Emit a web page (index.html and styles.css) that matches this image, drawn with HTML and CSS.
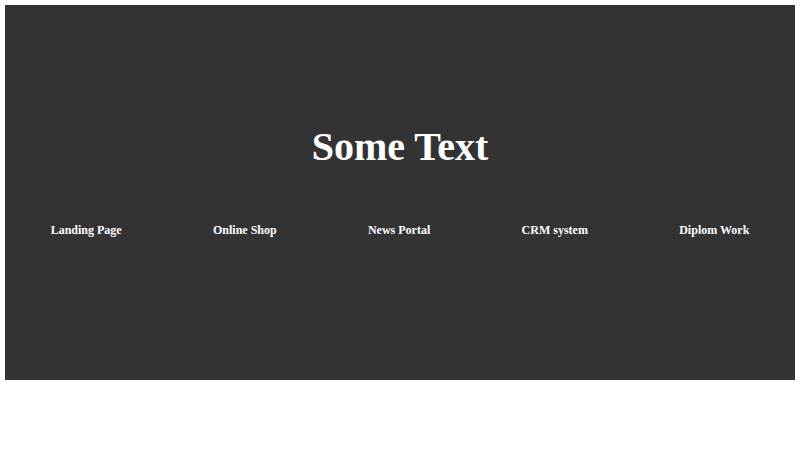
FILE: index.html
```html
<!DOCTYPE html>
<html>
<head>
<meta charset="utf-8">
<link rel="stylesheet" href="styles.css">
</head>
<body>
<header class="hero">
  <h1 class="hero-title">Some Text</h1>
  <nav class="hero-nav">
    <a class="nav-item" href="#">Landing Page</a>
    <a class="nav-item" href="#">Online Shop</a>
    <a class="nav-item" href="#">News Portal</a>
    <a class="nav-item" href="#">CRM system</a>
    <a class="nav-item" href="#">Diplom Work</a>
  </nav>
</header>
</body>
</html>
```
FILE: styles.css
```css
html, body {
  margin: 0;
  padding: 0;
  background: #fff;
}
body {
  padding: 5px;
  font-family: "Liberation Serif", "Times New Roman", serif;
}
.hero {
  background: #333333;
  height: 375px;
  box-sizing: border-box;
  padding-top: 119px;
  display: flex;
  flex-direction: column;
}
.hero-title {
  margin: 0;
  text-align: center;
  color: #fff;
  font-size: 40px;
  font-weight: bold;
  line-height: 46px;
}
.hero-nav {
  margin-top: 53px;
  display: flex;
  justify-content: space-around;
}
.nav-item {
  color: #fff;
  text-decoration: none;
  font-size: 12px;
  font-weight: bold;
  line-height: 14px;
}
```
